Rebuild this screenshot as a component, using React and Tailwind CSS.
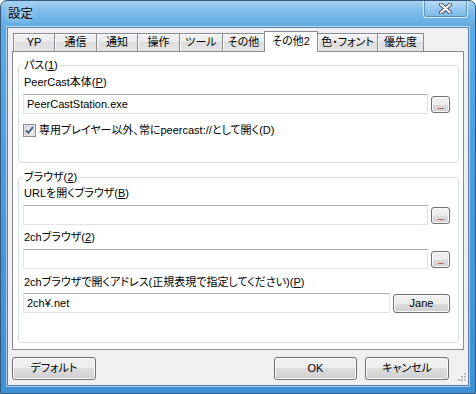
import React from "react";

function Btn({ className = "", children }) {
  return (
    <div
      className={
        "flex items-center justify-center rounded-[3px] border border-[#707070] bg-[linear-gradient(180deg,#f2f2f2_0%,#ebebeb_50%,#dddddd_50%,#cfcfcf_100%)] shadow-[inset_0_0_0_1px_#fbfbfb] leading-none " +
        className
      }
    >
      {children}
    </div>
  );
}

function TextBox({ className = "", children }) {
  return (
    <div
      className={
        "flex h-[20px] items-center border border-[#e2e3ea] border-t-[#abadb3] bg-white pl-[3px] leading-[14px] " +
        className
      }
    >
      {children}
    </div>
  );
}

function Tab({ w, selected, children }) {
  if (selected) {
    return (
      <div
        className={`${w} relative z-10 -ml-px mb-[-1px] flex h-[21px] items-center justify-center border border-b-0 border-[#898c95] bg-white pb-[2px]`}
      >
        {children}
      </div>
    );
  }
  return (
    <div
      className={`${w} -ml-px flex h-[18px] items-center justify-center border border-b-0 border-[#898c95] bg-[linear-gradient(180deg,#f3f3f3_0%,#ebebeb_50%,#dedede_50%,#e3e3e3_100%)] shadow-[inset_1px_1px_0_#fcfcfc]`}
    >
      {children}
    </div>
  );
}

function Ellipsis() {
  return (
    <Btn className="mt-[2px] h-[17px] w-[19px]">
      <span className="mt-[3px] text-[9px] tracking-[-0.5px]">...</span>
    </Btn>
  );
}

export default function App() {
  return (
    <div className="relative flex h-[394px] w-[476px] flex-col overflow-hidden rounded-t-[7px] border border-[#34577f] bg-[linear-gradient(180deg,#a6d2f2_0px,#84c0ec_8px,#5eaae2_26px,#4d9cdb_45%,#3f90d4_100%)] font-['Liberation_Sans','Noto_Sans_CJK_JP',sans-serif] text-[11px] text-black [font-feature-settings:'palt']">
      {/* title bar */}
      <div className="flex h-[26px] items-start justify-between pl-[7px] pr-[7px]">
        <div className="mt-[5px] leading-[16px] text-[12.5px] [text-shadow:0_0_6px_rgba(255,255,255,0.9)]">
          設定
        </div>
        <div className="-mt-px flex h-[18px] w-[45px] items-center justify-center rounded-b-[4px] border border-t-0 border-[rgba(255,255,255,0.65)] bg-[linear-gradient(180deg,rgba(255,255,255,0.25),rgba(255,255,255,0.05))] shadow-[inset_0_0_0_1px_rgba(40,80,130,0.45)]">
          <svg width="13" height="11" viewBox="0 0 13 11">
            <path
              d="M2 1.5 L11 9.5 M11 1.5 L2 9.5"
              stroke="#3a4f6a"
              strokeWidth="4"
              strokeLinecap="round"
            />
            <path
              d="M2 1.5 L11 9.5 M11 1.5 L2 9.5"
              stroke="#ffffff"
              strokeWidth="2.2"
              strokeLinecap="round"
            />
          </svg>
        </div>
      </div>

      {/* client area */}
      <div className="relative mx-[6px] mb-[7px] flex flex-1 flex-col border border-[#5d7ea6] bg-[#f0f0f0] shadow-[0_0_0_1px_rgba(255,255,255,0.55)]">
        <div className="mx-[4px] flex flex-col pt-[3px]">
          {/* tabs */}
          <div className="flex h-[20px] items-end pl-[2px]">
            <Tab w="w-[42px]">YP</Tab>
            <Tab w="w-[43px]">通信</Tab>
            <Tab w="w-[42px]">通知</Tab>
            <Tab w="w-[43px]">操作</Tab>
            <Tab w="w-[44px]">ツール</Tab>
            <Tab w="w-[43px]">その他</Tab>
            <Tab w="w-[54px]" selected>
              その他2
            </Tab>
            <Tab w="w-[61px]">色・フォント</Tab>
            <Tab w="w-[47px]">優先度</Tab>
          </div>

          {/* panel */}
          <div className="flex flex-col border border-[#898c95] bg-white pb-[6px] pl-[5px] pr-[4px] pt-[6px]">
            <fieldset className="m-0 min-w-0 rounded-[3px] border border-[#d5dfe5] pb-[25px] pl-[4px] pr-[8px]">
              <legend className="px-[1px] leading-[14px]">
                パス(<span className="underline">1</span>)
              </legend>
              <div className="ml-[1px] mt-[3px] leading-[14px]">
                PeerCast本体(<span className="underline">P</span>)
              </div>
              <div className="mt-[5px] flex items-start gap-[3px]">
                <TextBox className="flex-1">PeerCastStation.exe</TextBox>
                <Ellipsis />
              </div>
              <div className="mt-[9px] flex h-[14px] items-center gap-[3px]">
                <svg width="13" height="13" viewBox="0 0 13 13">
                  <defs>
                    <linearGradient id="cbg" x1="0" y1="0" x2="1" y2="1">
                      <stop offset="0" stopColor="#d6dbe2" />
                      <stop offset="1" stopColor="#fbfbfb" />
                    </linearGradient>
                  </defs>
                  <rect x="0.5" y="0.5" width="12" height="12" fill="#f4f4f4" stroke="#8e8f8f" />
                  <rect x="2" y="2" width="9" height="9" fill="url(#cbg)" stroke="#b9bcc2" strokeWidth="0.6" />
                  <path
                    d="M3 6.3 L5.3 8.8 L10 3.2"
                    fill="none"
                    stroke="#4a5e93"
                    strokeWidth="1.9"
                  />
                </svg>
                <span className="leading-[14px]">
                  専用プレイヤー以外、常にpeercast://として開く(D)
                </span>
              </div>
            </fieldset>

            <fieldset className="m-0 mt-[7px] min-w-0 rounded-[3px] border border-[#d5dfe5] pb-[29px] pl-[4px] pr-[8px]">
              <legend className="px-[1px] leading-[14px]">
                ブラウザ(<span className="underline">2</span>)
              </legend>
              <div className="ml-[1px] mt-[2px] leading-[14px]">
                URLを開くブラウザ(<span className="underline">B</span>)
              </div>
              <div className="mt-[5px] flex items-start gap-[3px]">
                <TextBox className="flex-1" />
                <Ellipsis />
              </div>
              <div className="ml-[1px] mt-[5px] leading-[14px]">
                2chブラウザ(<span className="underline">2</span>)
              </div>
              <div className="mt-[5px] flex items-start gap-[3px]">
                <TextBox className="flex-1" />
                <Ellipsis />
              </div>
              <div className="ml-[1px] mt-[6px] leading-[14px]">
                2chブラウザで開くアドレス(正規表現で指定してください)(<span className="underline">P</span>)
              </div>
              <div className="mt-[4px] flex items-start gap-[3px]">
                <TextBox className="flex-1">2ch¥.net</TextBox>
                <Btn className="mt-px h-[19px] w-[57px]">Jane</Btn>
              </div>
            </fieldset>
          </div>

          {/* bottom buttons */}
          <div className="mt-[7px] flex items-start pr-[15px]">
            <Btn className="h-[23px] w-[84px]">デフォルト</Btn>
            <div className="flex-1" />
            <Btn className="h-[23px] w-[83px]">OK</Btn>
            <Btn className="ml-[8px] h-[23px] w-[84px]">キャンセル</Btn>
          </div>
        </div>

        {/* resize grip */}
        <svg className="absolute bottom-[1px] right-[1px]" width="11" height="11" viewBox="0 0 11 11">
          {[
            [8, 0],
            [5, 3],
            [8, 3],
            [2, 6],
            [5, 6],
            [8, 6],
          ].map(([x, y], i) => (
            <g key={i}>
              <rect x={x + 1} y={y + 1} width="2" height="2" fill="#ffffff" />
              <rect x={x} y={y} width="2" height="2" fill="#b8bcc2" />
            </g>
          ))}
        </svg>
      </div>
    </div>
  );
}
